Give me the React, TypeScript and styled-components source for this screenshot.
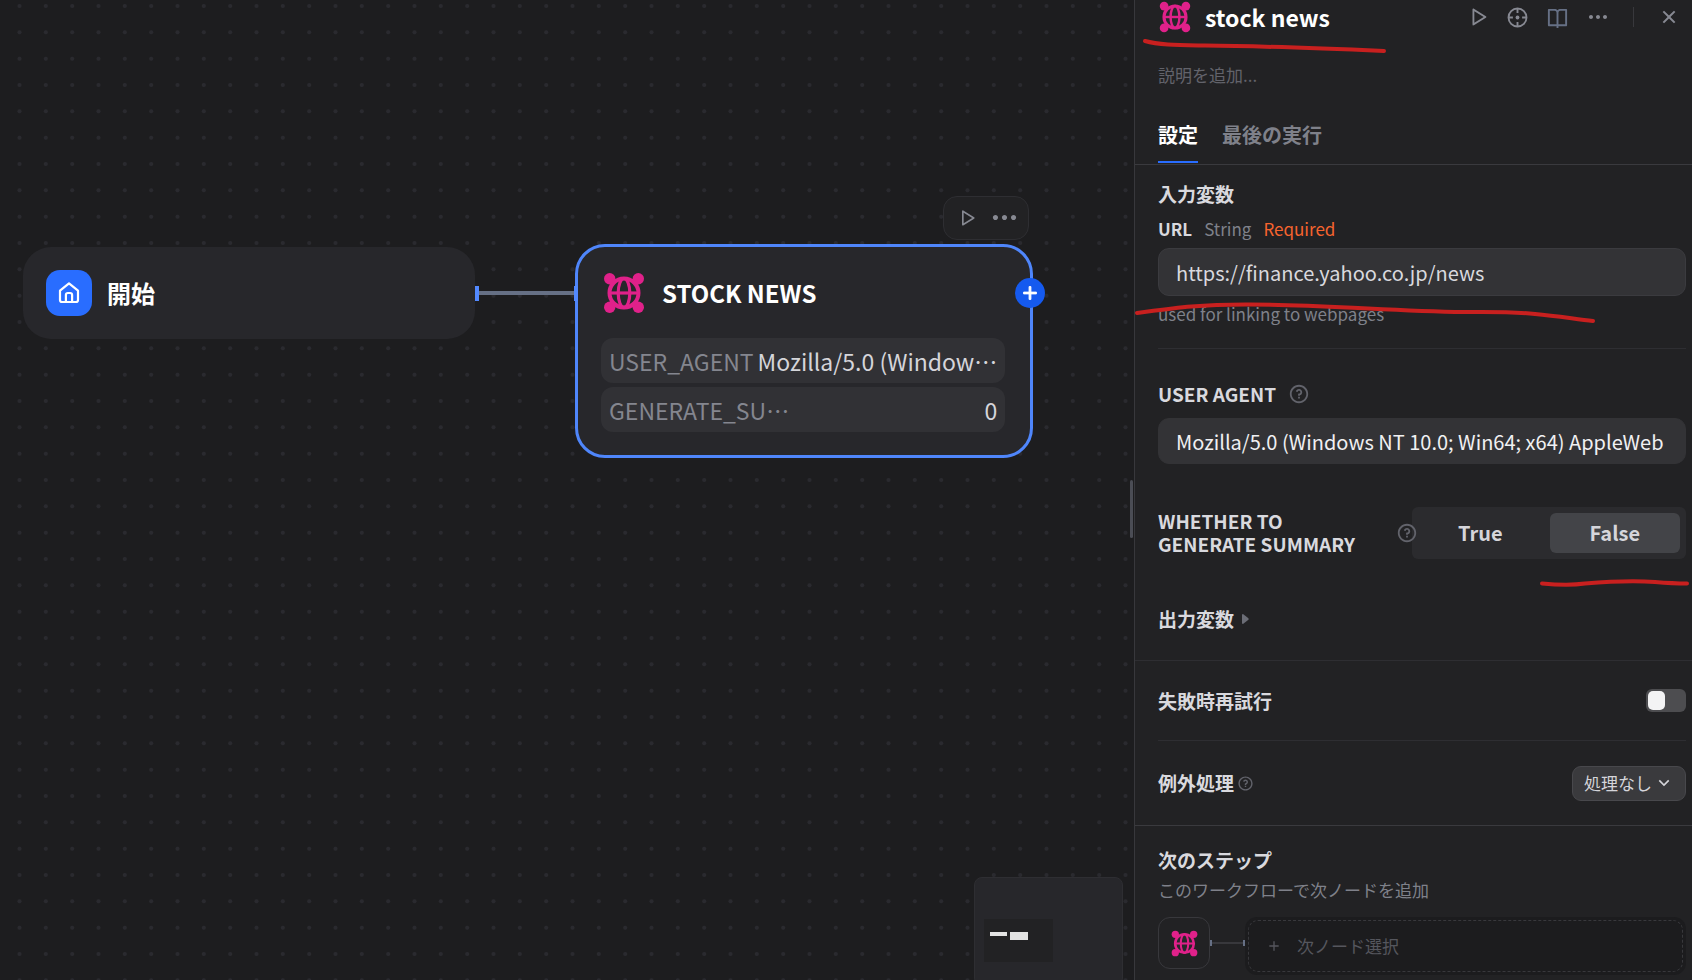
import React from "react";
import styled, { createGlobalStyle, css } from "styled-components";
import {
  RiAddLine,
  RiArrowDownSLine,
  RiBookOpenLine,
  RiCloseLine,
  RiMoreFill,
  RiPlayLargeLine,
  RiQuestionLine,
} from "react-icons/ri";

const GlobalStyle = createGlobalStyle`
  *, *::before, *::after { box-sizing: border-box; }
  body {
    margin: 0;
    background: #1d1d1f;
    color: #d9d9de;
    font-family: "Noto Sans CJK JP", "Noto Sans", sans-serif;
    font-size: 17px;
    line-height: 24px;
  }
  button, input, select { font: inherit; color: inherit; margin: 0; }
  h1, h2, h3, p { margin: 0; }
`;

const Page = styled.div`
  display: flex;
  height: 100vh;
  overflow: hidden;
`;

/* Canvas */

const Canvas = styled.main`
  position: relative;
  flex: 1;
  min-width: 0;
  overflow: hidden;
  background: #1d1d1f;
`;

const CanvasLayer = styled.svg`
  position: absolute;
  inset: 0;
  width: 100%;
  height: 100%;
`;

const NodeCard = styled.section<{ $selected?: boolean }>`
  position: absolute;
  background: #27272b;
  ${(p) =>
    p.$selected
      ? css`
          left: 575px;
          top: 244px;
          width: 458px;
          padding: 23px 25px 23px 23px;
          border: 3px solid #4f86fb;
          border-radius: 30px;
        `
      : css`
          left: 23px;
          top: 247px;
          width: 452px;
          padding: 23px;
          border-radius: 28px;
        `}
`;

const NodeHead = styled.header`
  display: flex;
  align-items: center;
  gap: 15px;
  height: 46px;
`;

const NodeTitle = styled.h2`
  color: #fff;
  font-size: 24px;
  line-height: 36px;
  font-weight: 700;
`;

const NodeBadge = styled.span<{ $bg?: string }>`
  display: grid;
  place-items: center;
  width: 46px;
  height: 46px;
  border-radius: 14px;
  background: ${(p) => p.$bg ?? "none"};
`;

const ParamList = styled.div`
  display: grid;
  gap: 4px;
  margin: 22px 3px 0 0;
`;

const ParamRow = styled.div`
  display: flex;
  justify-content: space-between;
  align-items: center;
  gap: 4px;
  height: 45px;
  padding: 0 8px;
  border-radius: 12px;
  background: #313135;
  color: #d5d5da;
  font-size: 23px;
  line-height: 32px;
  white-space: nowrap;
`;

const ParamName = styled.span`
  color: #84868f;
`;

const AddNext = styled.button`
  position: absolute;
  right: -15px;
  top: 31px;
  display: grid;
  place-items: center;
  width: 30px;
  height: 30px;
  padding: 0;
  border: 0;
  border-radius: 50%;
  background: #155aef;
  color: #fff;
`;

const NodeToolbar = styled.div`
  position: absolute;
  left: 943px;
  top: 196px;
  display: flex;
  align-items: center;
  justify-content: space-between;
  width: 86px;
  height: 44px;
  padding: 0 8px 1px 13px;
  border: 1px solid #2e2e32;
  border-radius: 14px;
  background: #222224;
`;

const IconButton = styled.button<{ $tone?: string }>`
  display: grid;
  place-items: center;
  padding: 0;
  border: 0;
  background: none;
  color: ${(p) => p.$tone ?? "#878992"};
`;

const MiniMap = styled.div`
  position: absolute;
  right: 11px;
  bottom: -6px;
  width: 149px;
  height: 109px;
  padding: 41px 9px;
  border: 1px solid #2e2e32;
  border-radius: 8px;
  background: #27272b;
`;

const MiniView = styled.div`
  display: flex;
  align-items: flex-start;
  gap: 3px;
  width: 69px;
  height: 43px;
  padding: 13px 6px;
  background: #222224;
`;

const MiniNode = styled.span<{ $w: number; $h: number }>`
  width: ${(p) => p.$w}px;
  height: ${(p) => p.$h}px;
  background: #e3e3e3;
`;

const ResizeGrip = styled.div`
  position: absolute;
  right: 1px;
  top: 480px;
  width: 3px;
  height: 58px;
  border-radius: 2px;
  background: #4b4d55;
`;

/* Side panel */

const Panel = styled.aside`
  position: relative;
  flex: none;
  width: 558px;
  border-left: 1px solid #38383c;
  background: #222224;
`;

const PanelHeader = styled.header`
  display: flex;
  align-items: center;
  gap: 14px;
  height: 34px;
  padding: 0 11px 0 24px;
`;

const PanelTitle = styled.h1`
  flex: 1;
  color: #fff;
  font-size: 23px;
  line-height: 34px;
  font-weight: 700;
`;

const HeaderTools = styled.div`
  display: flex;
  align-items: center;
  gap: 17px;
`;

const ToolDivider = styled.span`
  width: 1px;
  height: 20px;
  margin: 0 6px;
  background: #38383c;
`;

const Description = styled.input`
  display: block;
  width: 100%;
  height: 30px;
  margin-top: 25px;
  padding: 0 23px;
  border: 0;
  background: none;
  outline: none;
  &::placeholder { color: #62636b; opacity: 1; }
`;

const Tabs = styled.div`
  display: flex;
  gap: 24px;
  height: 55px;
  margin-top: 21px;
  padding: 0 23px 1px;
  border-bottom: 1px solid #3a3a3e;
`;

const Tab = styled.button<{ $active?: boolean }>`
  padding: 0 0 2px;
  border: 0;
  border-bottom: 2px solid ${(p) => (p.$active ? "#296dff" : "transparent")};
  background: none;
  color: ${(p) => (p.$active ? "#fff" : "#7f818a")};
  font-size: 20px;
  line-height: 30px;
  font-weight: 700;
`;

const Section = styled.section<{ $line?: "soft" | "strong"; $top?: number }>`
  padding: ${(p) => p.$top ?? 0}px 6px 0 23px;
  border-bottom: ${(p) =>
    p.$line ? `1px solid ${p.$line === "strong" ? "#3a3a3e" : "#2e2e32"}` : "0"};
`;

const Divider = styled.hr`
  height: 1px;
  margin: 0;
  border: 0;
  background: #2e2e32;
`;

const Heading = styled.h3`
  font-size: 19px;
  line-height: 28px;
  font-weight: 700;
`;

const FieldHead = styled.div<{ $gap?: number }>`
  display: flex;
  align-items: center;
  gap: ${(p) => p.$gap ?? 12}px;
`;

const UrlHead = styled(FieldHead)`
  padding: 9px 0 7px;
`;

const AgentHead = styled(FieldHead)`
  padding: 33px 0 12px;
`;

const FieldLabel = styled.label<{ $small?: boolean }>`
  font-size: ${(p) => (p.$small ? 17 : 19)}px;
  line-height: 24px;
  font-weight: 700;
`;

const Meta = styled.span<{ $required?: boolean }>`
  color: ${(p) => (p.$required ? "#f7642e" : "#7f818a")};
  font-size: 17px;
`;

const TextInput = styled.input<{ $outlined?: boolean }>`
  display: block;
  width: 100%;
  height: ${(p) => (p.$outlined ? 48 : 46)}px;
  padding: 0 17px;
  border: 1px solid ${(p) => (p.$outlined ? "#3b3b3f" : "#333336")};
  border-radius: 11px;
  outline: none;
  background: #333336;
  color: ${(p) => (p.$outlined ? "#d9d9de" : "#f0f0f2")};
  font-size: 20px;
`;

const Hint = styled.p`
  color: #7f818a;
  font-size: 17px;
  line-height: 24px;
`;

const InputHint = styled(Hint)`
  padding: 6px 0 22px;
`;

const NextHint = styled(Hint)`
  padding-top: 4px;
`;

const Row = styled.div<{ $h: number }>`
  display: flex;
  align-items: center;
  justify-content: space-between;
  height: ${(p) => p.$h}px;
`;

const SummaryField = styled.fieldset`
  display: flex;
  align-items: center;
  margin: 43px 0 0;
  padding: 0;
  border: 0;
`;

const SummaryLegend = styled.span`
  flex: 1;
  max-width: 238px;
  padding: 0 30px 2px 0;
  font-size: 19px;
  line-height: 23px;
  font-weight: 700;
`;

const HelpIcon = styled.span<{ $overlap?: boolean }>`
  position: relative;
  z-index: 1;
  display: grid;
  margin-right: ${(p) => (p.$overlap ? -6 : 0)}px;
  color: #62636b;
`;

const Segment = styled.div`
  display: grid;
  grid-template-columns: 1fr 1fr;
  gap: 4px;
  flex: 1;
  height: 52px;
  padding: 6px 6px 6px 3px;
  border-radius: 6px;
  background: #2b2b2e;
`;

const SegmentOption = styled.label`
  position: relative;
  display: grid;
  place-items: center;
  border-radius: 6px;
  color: #d5d5da;
  font-size: 20px;
  font-weight: 700;
  &:has(input:checked) { background: #434448; }
  input {
    position: absolute;
    inset: 0;
    width: 100%;
    height: 100%;
    opacity: 0;
  }
`;

const Disclosure = styled.button`
  display: flex;
  align-items: center;
  gap: 8px;
  height: 28px;
  margin: 46px 0 27px;
  padding: 0;
  border: 0;
  background: none;
  font-size: 19px;
  font-weight: 700;
`;

const Switch = styled.input`
  appearance: none;
  width: 40px;
  height: 23px;
  padding: 2px;
  border-radius: 6px;
  background: #4d4d50;
  &::before {
    content: "";
    display: block;
    width: 17px;
    height: 19px;
    border-radius: 5px;
    background: #f3f3f4;
  }
`;

const SelectWrap = styled.div`
  display: grid;
  align-items: center;
  width: 114px;
  height: 35px;
  > * { grid-area: 1 / 1; }
  svg {
    justify-self: end;
    margin-right: 12px;
    pointer-events: none;
    color: #d5d5da;
  }
`;

const Select = styled.select`
  appearance: none;
  width: 100%;
  height: 35px;
  padding: 0 30px 0 11px;
  border: 1px solid #48484c;
  border-radius: 9px;
  background: #3a3a3d;
  color: #d5d5da;
  font-size: 17px;
`;

const NextStep = styled.div`
  display: flex;
  align-items: flex-start;
  margin-top: 15px;
`;

const NextIcon = styled.span`
  display: grid;
  place-items: center;
  width: 52px;
  height: 52px;
  border: 1px solid #38383c;
  border-radius: 12px;
`;

const NextPicker = styled.div`
  flex: 1;
  padding: 3px;
  border-radius: 12px;
  background: #1c1c1e;
`;

const NextButton = styled.button`
  display: flex;
  align-items: center;
  gap: 15px;
  width: 100%;
  height: 52px;
  padding: 0 17px;
  border: 1px dashed #38383c;
  border-radius: 10px;
  background: none;
  color: #55565d;
`;

const Ink = styled.svg`
  position: absolute;
  left: 0;
  top: 0;
  z-index: 2;
  pointer-events: none;
`;

function GlobeIcon({ size }: { size: number }) {
  return (
    <svg width={size} height={size} viewBox="0 0 42 42" fill="none" aria-hidden="true">
      <g fill="#e0218a">
        <circle cx="6.7" cy="6.7" r="5.7" />
        <circle cx="35.3" cy="6.7" r="5.7" />
        <circle cx="6.7" cy="35.3" r="5.7" />
        <circle cx="35.3" cy="35.3" r="5.7" />
      </g>
      <circle cx="21" cy="21" r="15" fill="#27272b" />
      <g stroke="#e0218a">
        <circle cx="21" cy="21" r="14.5" strokeWidth="4" />
        <ellipse cx="21" cy="21" rx="5.8" ry="14.5" strokeWidth="3.2" />
        <path d="M6 21h30" strokeWidth="3.2" />
      </g>
    </svg>
  );
}

function HomeIcon() {
  return (
    <svg width="24" height="24" viewBox="0 0 24 24" fill="none" stroke="#fff" strokeWidth="2.2" strokeLinejoin="round" aria-hidden="true">
      <path d="M3 9.6 12 2.4l9 7.2V19a2 2 0 0 1-2 2H5a2 2 0 0 1-2-2z" />
      <path d="M8.9 21v-7a2 2 0 0 1 2-2h2.2a2 2 0 0 1 2 2v7" />
    </svg>
  );
}

function TargetIcon() {
  return (
    <svg width="23" height="23" viewBox="0 0 22 22" fill="none" stroke="currentColor" strokeWidth="1.8" aria-hidden="true">
      <circle cx="11" cy="11" r="8.6" />
      <path d="M11 2.4v4.2M11 15.4v4.2M2.4 11h4.2M15.4 11h4.2" />
      <circle cx="11" cy="11" r="1.8" fill="currentColor" stroke="none" />
    </svg>
  );
}

const dotOffsetsX = [19.5, 45.8, 72.2];
const dotOffsetsY = [6, 32.3, 58.7];

export default function App() {
  return (
    <>
      <GlobalStyle />
      <Page lang="ja">
        <Canvas>
          <CanvasLayer aria-hidden="true">
            <defs>
              <pattern id="dots" width="79" height="79" patternUnits="userSpaceOnUse">
                {dotOffsetsX.map((x) =>
                  dotOffsetsY.map((y) => (
                    <circle key={`${x}-${y}`} cx={x} cy={y} r="2" fill="#2a2a2f" />
                  )),
                )}
              </pattern>
            </defs>
            <rect width="100%" height="100%" fill="url(#dots)" />
            <path d="M479 293H575" stroke="#667085" strokeWidth="4" />
            <path d="M475 286h4v15h-4z" fill="#5289ff" />
          </CanvasLayer>

          <NodeCard>
            <NodeHead>
              <NodeBadge $bg="#296dff">
                <HomeIcon />
              </NodeBadge>
              <NodeTitle>開始</NodeTitle>
            </NodeHead>
          </NodeCard>

          <NodeToolbar>
            <IconButton aria-label="Run step">
              <RiPlayLargeLine size={20} />
            </IconButton>
            <IconButton aria-label="More">
              <RiMoreFill size={31} />
            </IconButton>
          </NodeToolbar>

          <NodeCard $selected>
            <NodeHead>
              <NodeBadge>
                <GlobeIcon size={42} />
              </NodeBadge>
              <NodeTitle>STOCK NEWS</NodeTitle>
            </NodeHead>
            <ParamList>
              <ParamRow>
                <ParamName>USER_AGENT</ParamName>
                <span>Mozilla/5.0 (Window…</span>
              </ParamRow>
              <ParamRow>
                <ParamName>GENERATE_SU…</ParamName>
                <span>0</span>
              </ParamRow>
            </ParamList>
            <AddNext aria-label="Add next node">
              <RiAddLine size={22} stroke="currentColor" strokeWidth={1} />
            </AddNext>
          </NodeCard>
          <CanvasLayer aria-hidden="true" pointerEvents="none">
            <path d="M574 286h4v15h-4z" fill="#5289ff" />
          </CanvasLayer>

          <MiniMap>
            <MiniView>
              <MiniNode $w={17} $h={4} />
              <MiniNode $w={18} $h={8} />
            </MiniView>
          </MiniMap>
          <ResizeGrip />
        </Canvas>

        <Panel>
          <PanelHeader>
            <GlobeIcon size={32} />
            <PanelTitle>stock news</PanelTitle>
            <HeaderTools>
              <IconButton aria-label="Run">
                <RiPlayLargeLine size={22} />
              </IconButton>
              <IconButton aria-label="Locate">
                <TargetIcon />
              </IconButton>
              <IconButton aria-label="Docs" $tone="#667085">
                <RiBookOpenLine size={23} />
              </IconButton>
              <IconButton aria-label="More">
                <RiMoreFill size={24} />
              </IconButton>
              <ToolDivider />
              <IconButton aria-label="Close">
                <RiCloseLine size={24} />
              </IconButton>
            </HeaderTools>
          </PanelHeader>

          <Description aria-label="説明" placeholder="説明を追加..." />

          <Tabs role="tablist">
            <Tab role="tab" aria-selected="true" $active>
              設定
            </Tab>
            <Tab role="tab" aria-selected="false">
              最後の実行
            </Tab>
          </Tabs>

          <Section $line="soft" $top={15}>
            <Heading>入力変数</Heading>
            <UrlHead>
              <FieldLabel htmlFor="url" $small>
                URL
              </FieldLabel>
              <Meta>String</Meta>
              <Meta $required>Required</Meta>
            </UrlHead>
            <TextInput id="url" $outlined defaultValue="https://finance.yahoo.co.jp/news" />
            <InputHint>used for linking to webpages</InputHint>
            <Divider />

            <AgentHead>
              <FieldLabel htmlFor="agent">USER AGENT</FieldLabel>
              <HelpIcon>
                <RiQuestionLine size={22} />
              </HelpIcon>
            </AgentHead>
            <TextInput id="agent" defaultValue="Mozilla/5.0 (Windows NT 10.0; Win64; x64) AppleWeb" />

            <SummaryField aria-labelledby="summary">
              <SummaryLegend id="summary">WHETHER TO GENERATE SUMMARY</SummaryLegend>
              <HelpIcon $overlap>
                <RiQuestionLine size={22} />
              </HelpIcon>
              <Segment>
                <SegmentOption>
                  <input type="radio" name="summary" />
                  True
                </SegmentOption>
                <SegmentOption>
                  <input type="radio" name="summary" defaultChecked />
                  False
                </SegmentOption>
              </Segment>
            </SummaryField>

            <Disclosure aria-expanded="false">
              出力変数
              <svg width="7" height="10" viewBox="0 0 7 10" aria-hidden="true">
                <path d="M0 1Q0 0 1 0L6.4 4.2Q7 5 6.4 5.8L1 10Q0 10 0 9Z" fill="#6b6d76" />
              </svg>
            </Disclosure>
          </Section>

          <Section $line="strong">
            <Row $h={79}>
              <FieldLabel htmlFor="retry">失敗時再試行</FieldLabel>
              <Switch id="retry" type="checkbox" role="switch" />
            </Row>
            <Divider />
            <Row $h={84}>
              <FieldHead $gap={3}>
                <FieldLabel htmlFor="errors">例外処理</FieldLabel>
                <HelpIcon>
                  <RiQuestionLine size={17} />
                </HelpIcon>
              </FieldHead>
              <SelectWrap>
                <Select id="errors">
                  <option>処理なし</option>
                </Select>
                <RiArrowDownSLine size={20} />
              </SelectWrap>
            </Row>
          </Section>

          <Section $top={20}>
            <Heading>次のステップ</Heading>
            <NextHint>このワークフローで次ノードを追加</NextHint>
            <NextStep>
              <NextIcon>
                <GlobeIcon size={27} />
              </NextIcon>
              <svg width="35" height="52" viewBox="0 0 35 52" aria-hidden="true">
                <path d="M0 26H35" stroke="#38383c" strokeWidth="2" />
                <path d="M1 23v6M34 23v6" stroke="#667085" strokeWidth="2" />
              </svg>
              <NextPicker>
                <NextButton>
                  <RiAddLine size={16} />
                  次ノード選択
                </NextButton>
              </NextPicker>
            </NextStep>
          </Section>

          <Ink width="558" height="620" viewBox="0 0 558 620" fill="none" stroke="#c8201f" strokeWidth="4" strokeLinecap="round" strokeLinejoin="round" aria-hidden="true">
            <path d="M10 41C24 45 44 45 70 45.500C130 46 190 48.500 249 51" />
            <path d="M2 313C40 308 62 304.500 110 304.500C180 304 230 310 320 312C350 312 372 311 400 314C422 316 440 319 458 321" />
            <path d="M407 583.500C424 585 436 585.500 450 583.500C480 581 500 580.500 520 582C532 583 544 583.500 552 583.500" />
          </Ink>
        </Panel>
      </Page>
    </>
  );
}
